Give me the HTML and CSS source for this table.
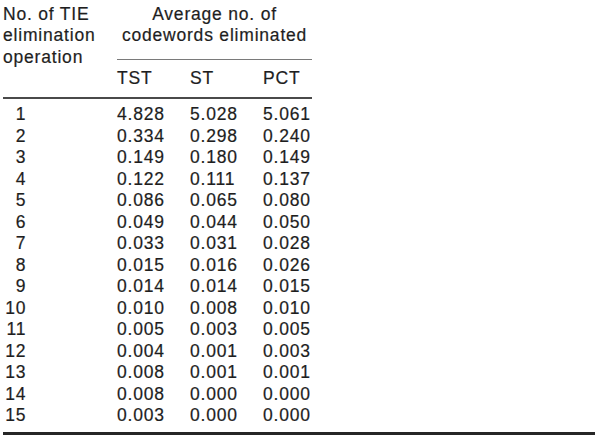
FILE: index.html
```html
<!DOCTYPE html>
<html lang="en">
<head>
<meta charset="utf-8">
<title>TIE elimination table</title>
<link rel="stylesheet" href="styles.css">
</head>
<body>
<div class="page">
  <table class="data">
    <colgroup>
      <col class="c-stub">
      <col class="c-val">
      <col class="c-val">
      <col class="c-last">
    </colgroup>
    <thead>
      <tr class="h1">
        <th class="stub">No. of TIE<br>elimination<br>operation</th>
        <th class="span" colspan="3"><div class="span-text">Average no. of<br>codewords eliminated</div></th>
      </tr>
      <tr class="h2">
        <th></th>
        <th>TST</th>
        <th>ST</th>
        <th>PCT</th>
      </tr>
    </thead>
    <tbody>
      <tr class="first"><td class="num">1</td><td>4.828</td><td>5.028</td><td>5.061</td></tr>
      <tr><td class="num">2</td><td>0.334</td><td>0.298</td><td>0.240</td></tr>
      <tr><td class="num">3</td><td>0.149</td><td>0.180</td><td>0.149</td></tr>
      <tr><td class="num">4</td><td>0.122</td><td>0.111</td><td>0.137</td></tr>
      <tr><td class="num">5</td><td>0.086</td><td>0.065</td><td>0.080</td></tr>
      <tr><td class="num">6</td><td>0.049</td><td>0.044</td><td>0.050</td></tr>
      <tr><td class="num">7</td><td>0.033</td><td>0.031</td><td>0.028</td></tr>
      <tr><td class="num">8</td><td>0.015</td><td>0.016</td><td>0.026</td></tr>
      <tr><td class="num">9</td><td>0.014</td><td>0.014</td><td>0.015</td></tr>
      <tr><td class="num">10</td><td>0.010</td><td>0.008</td><td>0.010</td></tr>
      <tr><td class="num">11</td><td>0.005</td><td>0.003</td><td>0.005</td></tr>
      <tr><td class="num">12</td><td>0.004</td><td>0.001</td><td>0.003</td></tr>
      <tr><td class="num">13</td><td>0.008</td><td>0.001</td><td>0.001</td></tr>
      <tr><td class="num">14</td><td>0.008</td><td>0.000</td><td>0.000</td></tr>
      <tr class="last"><td class="num">15</td><td>0.003</td><td>0.000</td><td>0.000</td></tr>
    </tbody>
  </table>
  <div class="bottom-rule"></div>
</div>
</body>
</html>
```

FILE: styles.css
```css
html, body {
  margin: 0;
  padding: 0;
  background: #ffffff;
}

.page {
  padding: 3.5px 0 0 3px;
  font-family: "Liberation Sans", Arial, sans-serif;
  font-size: 17.5px;
  line-height: 21.5px;
  letter-spacing: 0.8px;
  color: #1e1e1e;
  -webkit-text-stroke: 0.2px #1e1e1e;
}

.data {
  border-collapse: separate;
  border-spacing: 0;
  table-layout: fixed;
  width: 309px;
}

.c-stub { width: 114px; }
.c-val { width: 73px; }
.c-last { width: 49px; }

.data th,
.data td {
  padding: 0;
  font-weight: normal;
  text-align: left;
  vertical-align: top;
  white-space: nowrap;
}

.h1 .stub {
  text-align: left;
}

.h1 .span {
  text-align: center;
}

.span-text {
  padding-bottom: 12px;
  border-bottom: 1.5px solid #7a7a7a;
}

.h2 th {
  padding-bottom: 7px;
  border-bottom: 2px solid #4a4a4a;
}

.data td.num {
  text-align: right;
  padding-right: 90.7px;
}

.first td {
  padding-top: 5.5px;
}

.last td {
  padding-bottom: 5px;
}

.bottom-rule {
  height: 0;
  border-top: 3px solid #262626;
}
```
